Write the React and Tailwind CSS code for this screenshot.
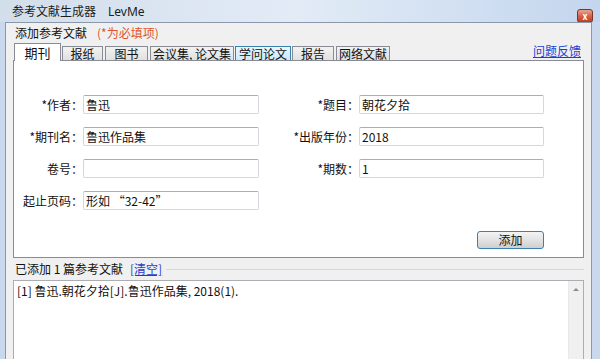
import React from 'react';

const cjk = { fontFamily: '"Noto Sans CJK SC", "Noto Sans", sans-serif' };

const tabs = [
  { label: '期刊', width: 'w-[47px]', gap: 'ml-[1px]', active: true },
  { label: '报纸', width: 'w-[41px]', gap: 'ml-[1px]' },
  { label: '图书', width: 'w-[43px]', gap: 'ml-[2px]' },
  { label: '会议集, 论文集', width: 'w-[84px]', gap: 'ml-[2px]' },
  { label: '学问论文', width: 'w-[56px]', gap: 'ml-[1px]', hover: true },
  { label: '报告', width: 'w-[42px]', gap: 'ml-[1px]' },
  { label: '网络文献', width: 'w-[54px]', gap: 'ml-[2px]' },
];

const rows = [
  { left: '*作者：', leftValue: '鲁迅', right: '*题目：', rightValue: '朝花夕拾' },
  { left: '*期刊名：', leftValue: '鲁迅作品集', right: '*出版年份：', rightValue: '2018' },
  { left: '卷号：', leftValue: '', right: '*期数：', rightValue: '1' },
  { left: '起止页码：', leftValue: '形如 “32-42”', right: '', rightValue: null },
];

function Field({ value, width }) {
  return (
    <div
      className={`${width} h-[19px] flex items-center rounded-[2px] border border-[#d3d7dd] border-t-[#abadb3] bg-white pl-[2px] text-[12px] leading-none text-[#111]`}
    >
      {value}
    </div>
  );
}

function Tab({ tab }) {
  if (tab.active) {
    return (
      <div
        className={`${tab.width} ${tab.gap} relative z-10 -mb-px flex h-[18px] items-center justify-center border border-b-0 border-[#898c95] bg-white text-[13px] leading-none`}
      >
        {tab.label}
      </div>
    );
  }
  const tone = tab.hover
    ? 'border-[#3c7fb1] bg-gradient-to-b from-[#eaf6fd] to-[#cde9f9]'
    : 'border-[#898c95] bg-gradient-to-b from-[#f2f2f2] to-[#e1e1e1]';
  return (
    <div
      className={`${tab.width} ${tab.gap} ${tone} flex h-[14px] items-center justify-center border border-b-0 text-[12px] leading-none`}
    >
      {tab.label}
    </div>
  );
}

export default function App() {
  return (
    <div className="flex h-[359px] w-[600px] flex-col overflow-hidden bg-[#c9d8ec] text-[#111]" style={cjk}>
      <div className="flex h-[22px] shrink-0 items-start bg-gradient-to-r from-[#d3deeb] via-[#e2ebf6] to-[#c3d6ee]">
        <div className="mt-[5px] pl-[12px] text-[12px] leading-none text-[#1b1b1b]">
          参考文献生成器
          <span className="ml-[12px]" style={{ fontFamily: '"Noto Sans", sans-serif' }}>
            LevMe
          </span>
        </div>
        <div className="ml-auto mr-[7px] mt-[9px] flex h-[14px] w-[16px] items-center justify-center rounded-[3px] border border-[#7a3526] bg-gradient-to-b from-[#eba393] via-[#d6634a] to-[#c0391f] text-[9px] font-bold leading-none text-white">
          x
        </div>
      </div>

      <div className="flex min-h-0 flex-1">
        <div className="w-[5px] shrink-0" />
        <div className="flex min-w-0 flex-1 flex-col border-x border-t border-[#8a98aa] bg-[#f0f0f0] pl-[7px] pr-[7px]">
          <div className="flex h-[20px] shrink-0 items-center pl-[2px] text-[12px] leading-none">
            添加参考文献
            <span className="ml-[10px] text-[#e0542a]">(*为必填项)</span>
          </div>

          <div className="flex h-[17px] shrink-0 items-end">
            {tabs.map((tab) => (
              <Tab key={tab.label} tab={tab} />
            ))}
            <a className="mb-[3px] ml-auto mr-[3px] text-[12px] leading-none text-[#1c3fd0] underline">问题反馈</a>
          </div>

          <div className="flex h-[198px] shrink-0 flex-col border border-[#898c95] bg-white pt-[34px]">
            <div className="flex flex-col gap-[13px]">
              {rows.map((row) => (
                <div key={row.left} className="flex items-center">
                  <div className="w-[69px] text-right text-[12px] leading-none">{row.left}</div>
                  <Field value={row.leftValue} width="w-[176px]" />
                  <div className="w-[100px] text-right text-[12px] leading-none">{row.right}</div>
                  {row.rightValue !== null && <Field value={row.rightValue} width="w-[185px]" />}
                </div>
              ))}
            </div>
            <div className="mt-[21px] flex justify-end pr-[39px]">
              <button
                type="button"
                className="flex h-[18px] w-[67px] items-center justify-center rounded-[3px] border border-[#3c7fb1] bg-gradient-to-b from-[#f4f4f4] via-[#e3e3e3] to-[#cfcfcf] text-[12px] leading-none"
              >
                添加
              </button>
            </div>
          </div>

          <div className="flex h-[22px] shrink-0 items-center pl-[2px] text-[12px] leading-none">
            <span>已添加 1 篇参考文献</span>
            <a className="ml-[7px] text-[#1c3fd0] underline">[清空]</a>
            <div className="ml-[4px] h-px flex-1 bg-[#d8d8d8]" />
          </div>

          <div className="flex min-h-0 flex-1 border border-b-0 border-[#abadb3] bg-white">
            <div className="flex-1 pl-[3px] pt-[4px] text-[12px] leading-none">
              [1] 鲁迅.朝花夕拾[J].鲁迅作品集, 2018(1).
            </div>
            <div className="flex w-[15px] flex-col items-center border-l border-[#e8e8e8] bg-[#f0f0f0] pt-[7px]">
              <div className="h-0 w-0 border-x-[3px] border-b-[3px] border-x-transparent border-b-[#8a8a8a]" />
            </div>
          </div>
        </div>
        <div className="w-[8px] shrink-0" />
      </div>
    </div>
  );
}
